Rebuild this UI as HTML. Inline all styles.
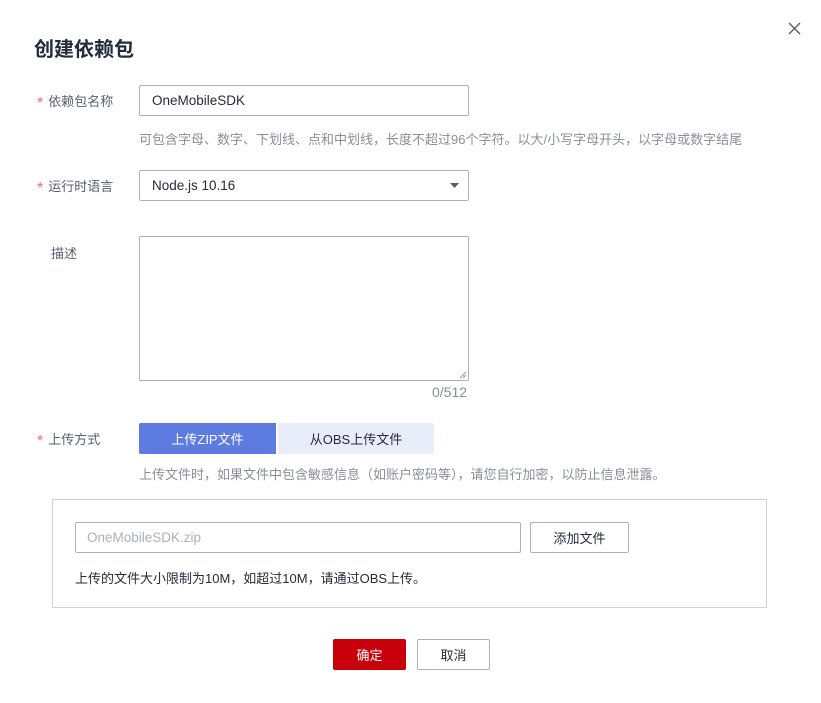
<!DOCTYPE html><html><head><meta charset="utf-8"><style>
*{box-sizing:border-box;margin:0;padding:0}
body{width:821px;height:703px;background:#fff;position:relative;font-family:"Liberation Sans","Noto Sans CJK SC",sans-serif;font-size:13px;color:#252b3a;overflow:hidden}
.a{position:absolute}
.lbl{position:absolute;left:37px;font-size:13px;color:#575d6c}
.lbl b{color:#f66f6a;font-weight:normal;margin-right:5px;font-size:16px;vertical-align:-2px}
.inp{position:absolute;border:1px solid #adb0b8;border-radius:2px;background:#fff;font-size:13.5px;padding-left:12px;display:flex;align-items:center}
.hint{position:absolute;font-size:13px;color:#8a8e99}
</style></head><body>
<div class="a" style="left:34px;top:33px;font-size:20px;font-weight:bold;color:#252b3a">创建依赖包</div>
<svg class="a" style="left:788px;top:22px" width="13" height="13" viewBox="0 0 13 13"><path d="M1 1L12 12M12 1L1 12" stroke="#575d6c" stroke-width="1.4"/></svg>
<div class="lbl" style="top:91px"><b>*</b>依赖包名称</div>
<div class="inp" style="left:139px;top:85px;width:330px;height:31px">OneMobileSDK</div>
<div class="hint" style="left:139px;top:129px">可包含字母、数字、下划线、点和中划线，长度不超过96个字符。以大/小写字母开头，以字母或数字结尾</div>
<div class="lbl" style="top:176px"><b>*</b>运行时语言</div>
<div class="inp" style="left:139px;top:170px;width:330px;height:31px">Node.js 10.16</div>
<svg class="a" style="left:450px;top:183px" width="9" height="6"><path d="M0 0H9L4.5 5Z" fill="#575d6c"/></svg>
<div class="lbl" style="top:243px;left:51px">描述</div>
<div class="inp" style="left:139px;top:236px;width:330px;height:145px"></div>
<svg class="a" style="left:459px;top:371px" width="8" height="8"><path d="M7 1L1 7M7 4L4 7" stroke="#999" stroke-width="1"/></svg>
<div class="hint" style="left:432px;top:384px;font-size:14px">0/512</div>
<div class="lbl" style="top:429px"><b>*</b>上传方式</div>
<div class="a" style="left:139px;top:423px;width:137px;height:31px;background:#5e7ce0;color:#fff;font-size:13px;display:flex;align-items:center;justify-content:center;border-radius:2px 0 0 2px">上传ZIP文件</div>
<div class="a" style="left:278px;top:423px;width:156px;height:31px;background:#e9edfa;color:#252b3a;font-size:13px;display:flex;align-items:center;justify-content:center;border-radius:0 2px 2px 0">从OBS上传文件</div>
<div class="hint" style="left:139px;top:464px">上传文件时，如果文件中包含敏感信息（如账户密码等），请您自行加密，以防止信息泄露。</div>
<div class="a" style="left:52px;top:499px;width:715px;height:109px;border:1px solid #d0d2d6"></div>
<div class="inp" style="left:75px;top:522px;width:446px;height:31px;color:#adb0b8;padding-left:11px">OneMobileSDK.zip</div>
<div class="a" style="left:530px;top:522px;width:99px;height:31px;border:1px solid #adb0b8;border-radius:2px;display:flex;align-items:center;justify-content:center;font-size:13px">添加文件</div>
<div class="a" style="left:75px;top:568px;font-size:13px">上传的文件大小限制为10M，如超过10M，请通过OBS上传。</div>
<div class="a" style="left:333px;top:639px;width:73px;height:31px;background:#c7000b;color:#fff;border-radius:2px;display:flex;align-items:center;justify-content:center">确定</div>
<div class="a" style="left:417px;top:639px;width:73px;height:31px;border:1px solid #adb0b8;border-radius:2px;display:flex;align-items:center;justify-content:center">取消</div>
</body></html>
